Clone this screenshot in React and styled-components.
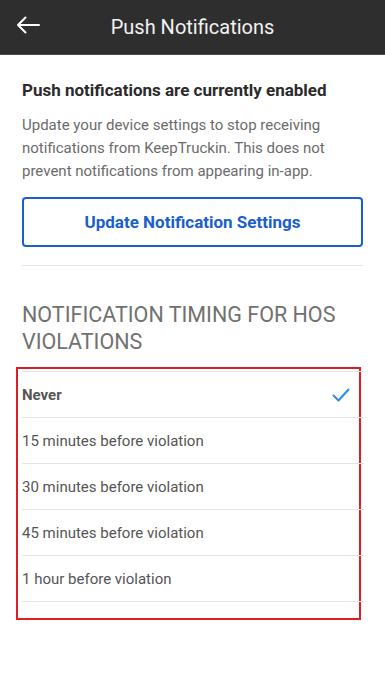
import React from "react";
import styled, { createGlobalStyle } from "styled-components";

const options = [
  { label: "Never", selected: true },
  { label: "15 minutes before violation" },
  { label: "30 minutes before violation" },
  { label: "45 minutes before violation" },
  { label: "1 hour before violation" },
];

const App = () => {
  return (
    <Screen>
      <GlobalStyle />
      <TopBar>
        <BackButton aria-label="Back">
          <svg width="24" height="18" viewBox="0 0 24 18" fill="none">
            <path
              d="M23 9H2M9.5 1.5L2 9l7.5 7.5"
              stroke="#fff"
              strokeWidth="2"
              strokeLinecap="round"
              strokeLinejoin="round"
            />
          </svg>
        </BackButton>
        <Title>Push Notifications</Title>
      </TopBar>

      <Content>
        <Heading>Push notifications are currently enabled</Heading>
        <Body>
          Update your device settings to stop receiving notifications from
          KeepTruckin. This does not prevent notifications from appearing
          in-app.
        </Body>
        <OutlineButton>Update Notification Settings</OutlineButton>
        <Divider />

        <SectionTitle>NOTIFICATION TIMING FOR HOS VIOLATIONS</SectionTitle>

        <Highlight>
          <OptionList>
            {options.map((o) => (
              <Option key={o.label} selected={o.selected}>
                <span>{o.label}</span>
                {o.selected && (
                  <svg width="18" height="14" viewBox="0 0 18 14" fill="none">
                    <path
                      d="M1.5 7.5l5 5L16.5 1.5"
                      stroke="#2f8de4"
                      strokeWidth="2"
                      strokeLinecap="round"
                      strokeLinejoin="round"
                    />
                  </svg>
                )}
              </Option>
            ))}
          </OptionList>
        </Highlight>
      </Content>
    </Screen>
  );
};

const GlobalStyle = createGlobalStyle`
  body {
    margin: 0;
    background: #fff;
    font-family: Roboto, "Liberation Sans", sans-serif;
  }
`;

const Screen = styled.div`
  width: 385px;
  min-height: 690px;
  background: #fff;
`;

const TopBar = styled.header`
  position: relative;
  height: 54px;
  background: #2e2e2e;
  border-bottom: 1px solid #4a4a4a;
  display: flex;
  align-items: center;
  justify-content: center;
`;

const BackButton = styled.button`
  position: absolute;
  left: 16px;
  top: 16px;
  padding: 0;
  border: 0;
  background: none;
  display: flex;
`;

const Title = styled.h1`
  margin: 0;
  font-size: 20px;
  font-weight: 400;
  color: #f2f2f2;
`;

const Content = styled.main`
  padding: 23px 22px 0 22px;
  display: flex;
  flex-direction: column;
`;

const Heading = styled.h2`
  margin: 0;
  font-size: 17px;
  font-weight: 700;
  line-height: 24px;
  color: #2b2b2b;
`;

const Body = styled.p`
  margin: 12px 0 0;
  font-size: 15px;
  line-height: 23px;
  color: #6b6b6b;
`;

const OutlineButton = styled.button`
  margin-top: 14px;
  height: 50px;
  border: 2px solid #1a5fce;
  border-radius: 4px;
  background: #fff;
  color: #1a5fce;
  font-family: inherit;
  font-size: 17px;
  font-weight: 700;
`;

const Divider = styled.hr`
  margin: 18px 0 0;
  border: 0;
  border-top: 1px solid #e6e6e6;
`;

const SectionTitle = styled.h3`
  margin: 35px 0 0;
  font-size: 21.5px;
  font-weight: 400;
  line-height: 27px;
  color: #717171;
`;

const Highlight = styled.div`
  margin: 12px 2px 0 -6px;
  border: 2px solid #e01c24;
  padding: 2px 0 16px 4px;
`;

const OptionList = styled.ul`
  list-style: none;
  margin: 0 -5px 0 0;
  padding: 0;
  border-top: 1px solid #e4e4e4;
`;

const Option = styled.li`
  height: 45px;
  border-bottom: 1px solid #e4e4e4;
  display: flex;
  align-items: center;
  justify-content: space-between;
  padding-right: 14px;
  font-size: 15px;
  color: #555;
  font-weight: ${(p) => (p.selected ? 700 : 400)};
`;

export default App;
